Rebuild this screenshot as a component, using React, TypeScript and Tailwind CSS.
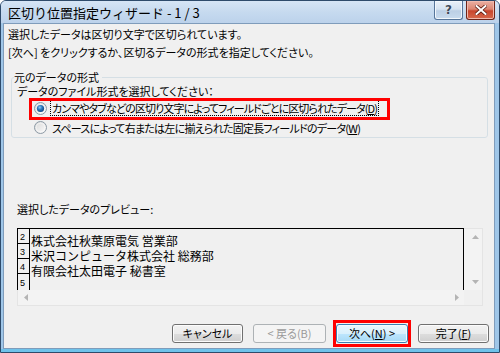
import React from "react";

const FONT = "font-['Noto_Sans_CJK_JP',sans-serif]";

function Radio({ checked, id }: { checked?: boolean; id: string }) {
  return (
    <svg width="13" height="13" viewBox="0 0 13 13" className="shrink-0">
      <defs>
        <linearGradient id={`rb-${id}`} x1="0" y1="0" x2="1" y2="1">
          <stop offset="0" stopColor="#d8d8d8" />
          <stop offset="1" stopColor="#fbfbfb" />
        </linearGradient>
        <radialGradient id={`rd-${id}`} cx="0.4" cy="0.35" r="0.7">
          <stop offset="0" stopColor="#8fd0f7" />
          <stop offset="0.45" stopColor="#2c79bf" />
          <stop offset="1" stopColor="#0c3f79" />
        </radialGradient>
      </defs>
      <circle cx="6.5" cy="6.5" r="6" fill={`url(#rb-${id})`} stroke="#8d9aa5" strokeWidth="1" />
      <circle cx="6.5" cy="6.5" r="4.3" fill="none" stroke="#ffffff" strokeOpacity="0.6" strokeWidth="0.8" />
      {checked && <circle cx="6.5" cy="6.5" r="3.6" fill={`url(#rd-${id})`} />}
    </svg>
  );
}

function Btn({
  w,
  kind,
  children,
}: {
  w: string;
  kind: "normal" | "disabled" | "focus";
  children: React.ReactNode;
}) {
  const base =
    "h-[19px] rounded-[3px] border flex items-center justify-center text-[11px] leading-none [font-feature-settings:'palt'] " +
    w;
  if (kind === "disabled")
    return <div className={base + " border-[#adb2b5] bg-[#f4f4f4] text-[#9a9a9a]"}>{children}</div>;
  if (kind === "focus")
    return (
      <div
        className={
          base +
          " border-[#3c7fb1] bg-[linear-gradient(#eaf6fd_0%,#d9f0fc_50%,#bee6fd_51%,#a7d9f5_100%)] shadow-[inset_0_0_0_1px_#f4fbff] text-black"
        }
      >
        {children}
      </div>
    );
  return (
    <div
      className={
        base +
        " border-[#707070] bg-[linear-gradient(#f2f2f2_0%,#ebebeb_50%,#dddddd_51%,#cfcfcf_100%)] shadow-[inset_0_0_0_1px_#fcfcfc] text-black"
      }
    >
      {children}
    </div>
  );
}

function Tri({ dir }: { dir: "up" | "down" | "left" | "right" }) {
  const pts =
    dir === "up"
      ? "0,4 7,4 3.5,0"
      : dir === "down"
      ? "0,0 7,0 3.5,4"
      : dir === "left"
      ? "4,0 4,7 0,3.5"
      : "0,0 0,7 4,3.5";
  const wh = dir === "up" || dir === "down" ? { w: 7, h: 4 } : { w: 4, h: 7 };
  return (
    <svg width={wh.w} height={wh.h} viewBox={`0 0 ${wh.w} ${wh.h}`}>
      <polygon points={pts} fill="#b4b4b4" />
    </svg>
  );
}

export default function App() {
  const rows = ["株式会社秋葉原電気 営業部", "米沢コンピュータ株式会社 総務部", "有限会社太田電子 秘書室", ""];
  return (
    <div className={`w-[500px] h-[353px] ${FONT} text-black`}>
      <div className="w-[500px] h-[353px] flex flex-col border border-[#2e4b6b] rounded-t-[6px] overflow-hidden bg-[#bfd4ec]">
        {/* Title bar */}
        <div className="h-[22px] flex items-start bg-[linear-gradient(#d6e5f5_0%,#c6daef_50%,#bcd2eb_100%)]">
          <div className="pl-[7px] pt-[4px] text-[13px] leading-[15px] text-black whitespace-nowrap">
            区切り位置指定ウィザード - 1 / 3
          </div>
          <div className="flex-1" />
          <div className="flex gap-[3px] mr-[4px]">
            <div className="w-[29px] h-[19px] rounded-b-[3px] border border-t-0 border-[#56759a] bg-[linear-gradient(#eaf1f9_0%,#d6e3f1_45%,#bccfe5_55%,#c9dbee_100%)] shadow-[inset_0_0_0_1px_#f2f7fc] flex items-center justify-center">
              <span className="text-[12px] leading-none font-bold text-[#3d4a58] font-['DejaVu_Sans',sans-serif] [text-shadow:0_0_1px_#fff]">
                ?
              </span>
            </div>
            <div className="w-[29px] h-[19px] rounded-b-[3px] border border-t-0 border-[#6e2418] bg-[linear-gradient(#eab0a3_0%,#dc8672_45%,#c8452d_55%,#d7694c_100%)] shadow-[inset_0_0_0_1px_#f0b9ad] flex items-center justify-center">
              <svg width="12" height="10" viewBox="0 0 12 10">
                <path d="M1.5 1 L10.5 9 M10.5 1 L1.5 9" stroke="#5a1b10" strokeWidth="3.6" strokeLinecap="square" />
                <path d="M1.5 1 L10.5 9 M10.5 1 L1.5 9" stroke="#ffffff" strokeWidth="2" strokeLinecap="square" />
              </svg>
            </div>
          </div>
        </div>

        {/* Middle */}
        <div className="flex-1 flex">
          <div className="w-[2px] bg-[#9fc6e8]" />
          <div className="flex-1 border border-[#7f9cbb] bg-[#f0f0f0] flex flex-col text-[11px] [font-feature-settings:'palt']">
            <div className="px-[4px] pt-[1px]">
              <div className="leading-[18px] whitespace-nowrap">選択したデータは区切り文字で区切られています。</div>
              <div className="leading-[18px] whitespace-nowrap">[次へ] をクリックするか、区切るデータの形式を指定してください。</div>

              <fieldset className="mt-[9px] ml-[3px] mr-[2px] border border-[#d5dfe5] rounded-[3px] pl-[2px] pr-0 pb-0 pt-0">
                <legend className="leading-[14px] pr-[3px] whitespace-nowrap">元のデータの形式</legend>
                <div className="pl-[3px] leading-[14px] whitespace-nowrap">データのファイル形式を選択してください：</div>
                <div className="relative h-[20px] flex items-center pl-[20px]">
                  <Radio checked id="a" />
                  <div className="ml-[3px] border border-dotted border-black px-[1px] leading-[14px] whitespace-nowrap tracking-[-0.9px]">
                    カンマやタブなどの区切り文字によってフィールドごとに区切られたデータ(<span className="underline">D</span>)
                  </div>
                  <div className="absolute left-[15px] top-0 w-[361px] h-[22px] border-[3px] border-[#ff0000]" />
                </div>
                <div className="h-[19px] flex items-center pl-[20px]">
                  <Radio id="b" />
                  <div className="ml-[4px] px-[1px] leading-[14px] whitespace-nowrap tracking-[-0.75px]">
                    スペースによって右または左に揃えられた固定長フィールドのデータ(<span className="underline">W</span>)
                  </div>
                </div>
              </fieldset>

              <div className="mt-[64px] pl-[9px] leading-[14px] whitespace-nowrap">選択したデータのプレビュー:</div>

              {/* Preview */}
              <div className="ml-[9px] mt-[12px] w-[466px] h-[78px] flex flex-col [font-feature-settings:normal]">
                <div className="flex h-[62px]">
                  <div className="w-[447px] border-l border-t border-r border-black flex overflow-hidden">
                    <div className="w-[12px] border-r border-black flex flex-col shrink-0">
                      {["2", "3", "4", "5"].map((n, i) => (
                        <div
                          key={n}
                          className={
                            "h-[15px] shrink-0 pl-[2px] flex items-end text-[9px] leading-[11px] font-['Liberation_Sans',sans-serif] " +
                            (i < 3 ? "border-b border-black" : "")
                          }
                        >
                          {n}
                        </div>
                      ))}
                    </div>
                    <div className="flex-1 pt-[4px] pl-[1px] text-[12px]">
                      {rows.map((r, i) => (
                        <div key={i} className="h-[15px] leading-[15px] whitespace-pre">
                          {r}
                        </div>
                      ))}
                    </div>
                  </div>
                  <div className="w-[19px] bg-[#f3f3f3] border-t border-r border-[#e4e4e4] flex flex-col items-center justify-between pt-[6px] pb-[6px] pl-[4px]">
                    <Tri dir="up" />
                    <Tri dir="down" />
                  </div>
                </div>
                <div className="flex h-[16px]">
                  <div className="w-[447px] bg-[#f3f3f3] border-b border-l border-[#e4e4e4] flex items-center justify-between pl-[6px] pr-[5px]">
                    <Tri dir="left" />
                    <Tri dir="right" />
                  </div>
                  <div className="w-[19px] bg-[#f0f0f0] border-b border-r border-[#e4e4e4]" />
                </div>
              </div>

              {/* Buttons */}
              <div className="mt-[18px] mr-[1px] flex justify-end gap-[10px]">
                <Btn w="w-[71px]" kind="normal">キャンセル</Btn>
                <Btn w="w-[73px]" kind="disabled">&lt; 戻る(B)</Btn>
                <div className="relative">
                  <Btn w="w-[72px]" kind="focus">
                    次へ(<span className="underline">N</span>) &gt;
                  </Btn>
                  <div className="absolute left-[-3px] top-[-4px] w-[78px] h-[27px] border-[3px] border-[#ff0000]" />
                </div>
                <Btn w="w-[71px]" kind="normal">
                  完了(<span className="underline">F</span>)
                </Btn>
              </div>
            </div>
          </div>
          <div className="w-[4px] bg-[#9fc6e8]" />
        </div>
        <div className="h-[3px] bg-[#6fc2ea]" />
      </div>
    </div>
  );
}
